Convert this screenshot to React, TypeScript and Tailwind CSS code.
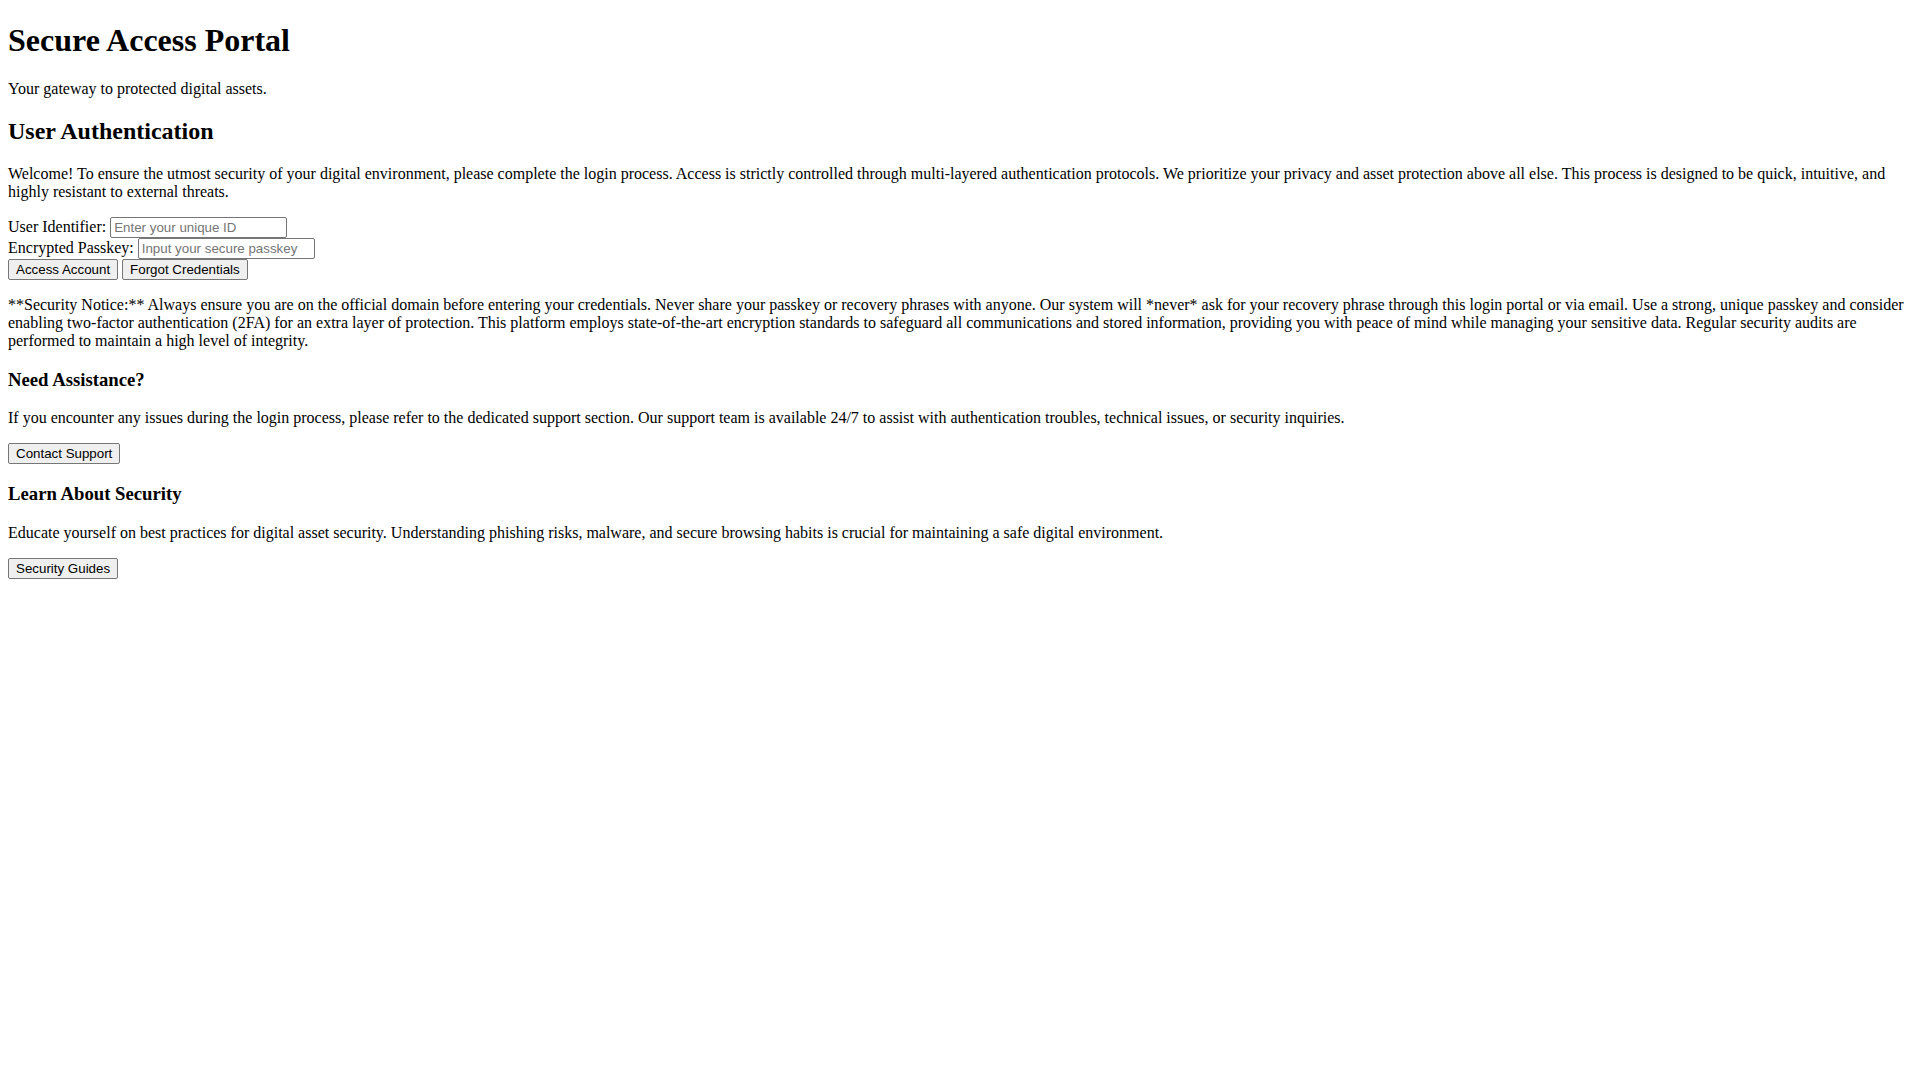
import React from "react";

const btn =
  "inline-block font-['Liberation_Sans',Arial,sans-serif] text-[13.333px] leading-[normal] text-black bg-[#efefef] border border-[#767676] rounded-[2px] px-[7px] py-[2px] hover:bg-[#e5e5e5]";
const inp =
  "inline-block w-[177px] font-['Liberation_Sans',Arial,sans-serif] text-[13.333px] leading-[normal] text-black bg-white border border-[#767676] rounded-[2px] px-[3px] py-[2px] placeholder:text-[#757575] outline-none";

export default function App() {
  return (
    <div className="min-h-screen bg-white px-[8px] pb-[8px] pt-[0.1px] font-['Liberation_Serif','Times_New_Roman',serif] text-[16px] leading-[normal] text-black">
      <h1 className="mt-[21.44px] text-[32px] font-bold">Secure Access Portal</h1>
      <p className="mt-[21.44px]">Your gateway to protected digital assets.</p>
      <h2 className="mt-[19.92px] text-[24px] font-bold">User Authentication</h2>
      <p className="mt-[19.92px]">
        Welcome! To ensure the utmost security of your digital environment, please complete the login process. Access is strictly controlled through multi-layered authentication protocols. We prioritize your privacy and asset protection above all else. This process is designed to be quick, intuitive, and highly resistant to external threats.
      </p>
      <form className="mt-[16px]" onSubmit={(e) => e.preventDefault()}>
        <div>
          <label htmlFor="uid">User Identifier:</label>{" "}
          <input id="uid" type="text" placeholder="Enter your unique ID" className={inp} />
        </div>
        <div>
          <label htmlFor="pk">Encrypted Passkey:</label>{" "}
          <input id="pk" type="password" placeholder="Input your secure passkey" className={inp} />
        </div>
        <div>
          <button type="submit" className={btn}>Access Account</button>{" "}
          <button type="button" className={btn}>Forgot Credentials</button>
        </div>
      </form>
      <p className="mt-[16px]">
        **Security Notice:** Always ensure you are on the official domain before entering your credentials. Never share your passkey or recovery phrases with anyone. Our system will *never* ask for your recovery phrase through this login portal or via email. Use a strong, unique passkey and consider enabling two-factor authentication (2FA) for an extra layer of protection. This platform employs state-of-the-art encryption standards to safeguard all communications and stored information, providing you with peace of mind while managing your sensitive data. Regular security audits are performed to maintain a high level of integrity.
      </p>
      <h3 className="mt-[18.72px] text-[18.72px] font-bold">Need Assistance?</h3>
      <p className="mt-[18.72px]">
        If you encounter any issues during the login process, please refer to the dedicated support section. Our support team is available 24/7 to assist with authentication troubles, technical issues, or security inquiries.
      </p>
      <div className="mt-[16px]">
        <button type="button" className={btn}>Contact Support</button>
      </div>
      <h3 className="mt-[18.72px] text-[18.72px] font-bold">Learn About Security</h3>
      <p className="mt-[18.72px]">
        Educate yourself on best practices for digital asset security. Understanding phishing risks, malware, and secure browsing habits is crucial for maintaining a safe digital environment.
      </p>
      <div className="mt-[16px]">
        <button type="button" className={btn}>Security Guides</button>
      </div>
    </div>
  );
}
